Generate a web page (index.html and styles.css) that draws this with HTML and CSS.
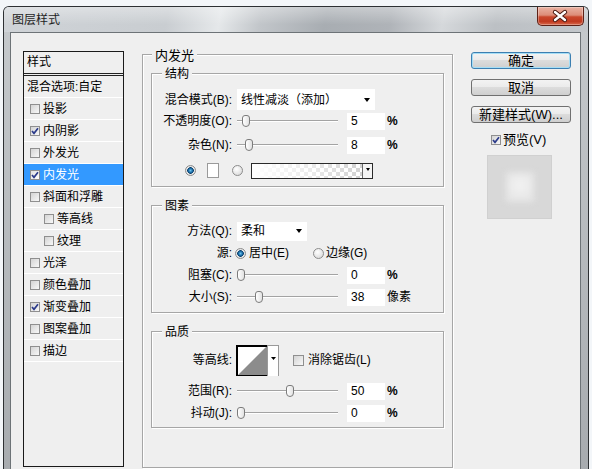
FILE: index.html
```html
<!DOCTYPE html>
<html lang="zh-CN">
<head>
<meta charset="utf-8">
<title>图层样式</title>
<link rel="stylesheet" href="styles.css">
</head>
<body>
<div class="window">
  <div class="titlebar">
    <span class="title">图层样式</span>
    <div class="close">
      <svg width="45" height="18" viewBox="0 0 45 18">
        <path d="M17 5 L27 13 M27 5 L17 13" stroke="#4a1a12" stroke-width="4.4" stroke-linecap="round"/>
        <path d="M17 5 L27 13 M27 5 L17 13" stroke="#fff" stroke-width="2.4" stroke-linecap="round"/>
      </svg>
    </div>
  </div>
  <div class="frame">
    <div class="client">
      <div class="stylelist">
        <div class="lh">样式</div>
        <div class="li plain">混合选项:自定</div>
        <div class="li"><span class="cb"></span>投影</div>
        <div class="li"><span class="cb"><svg width="8" height="8" viewBox="0 0 8 8"><path d="M1 4 L3 6.3 L7 1.3" fill="none" stroke="#2b3a8a" stroke-width="1.7"/></svg></span>内阴影</div>
        <div class="li"><span class="cb"></span>外发光</div>
        <div class="li sel"><span class="cb"><svg width="8" height="8" viewBox="0 0 8 8"><path d="M1 4 L3 6.3 L7 1.3" fill="none" stroke="#2b3a8a" stroke-width="1.7"/></svg></span>内发光</div>
        <div class="li"><span class="cb"></span>斜面和浮雕</div>
        <div class="li sub"><span class="cb"></span>等高线</div>
        <div class="li sub"><span class="cb"></span>纹理</div>
        <div class="li"><span class="cb"></span>光泽</div>
        <div class="li"><span class="cb"></span>颜色叠加</div>
        <div class="li"><span class="cb"><svg width="8" height="8" viewBox="0 0 8 8"><path d="M1 4 L3 6.3 L7 1.3" fill="none" stroke="#2b3a8a" stroke-width="1.7"/></svg></span>渐变叠加</div>
        <div class="li"><span class="cb"></span>图案叠加</div>
        <div class="li"><span class="cb"></span>描边</div>
      </div>

      <div class="group outer">
        <span class="gt">内发光</span>

        <div class="group inner g-struct">
          <span class="gt">结构</span>
          <div class="row r-a">
            <span class="lbl">混合模式(B):</span>
            <div class="dd wide"><span>线性减淡（添加）</span><span class="tri"></span></div>
          </div>
          <div class="row r-b">
            <span class="lbl">不透明度(O):</span>
            <div class="slider"><span class="thumb" style="margin-left:5px"></span></div>
            <span class="num">5</span><span class="unit">%</span>
          </div>
          <div class="row r-c">
            <span class="lbl">杂色(N):</span>
            <div class="slider"><span class="thumb" style="margin-left:8px"></span></div>
            <span class="num">8</span><span class="unit">%</span>
          </div>
          <div class="row r-d">
            <span class="radio on"></span>
            <span class="swatch"></span>
            <span class="radio r2"></span>
            <div class="grad"><span class="grad-fill"></span><span class="grad-btn"><span class="tri small"></span></span></div>
          </div>
        </div>

        <div class="group inner g-elem">
          <span class="gt">图素</span>
          <div class="row r-e first">
            <span class="lbl">方法(Q):</span>
            <div class="dd narrow"><span>柔和</span><span class="tri"></span></div>
          </div>
          <div class="row r-e">
            <span class="lbl tight">源:</span>
            <span class="radio on"></span>
            <span class="opt">居中(E)</span>
            <span class="radio r3"></span>
            <span class="opt o2">边缘(G)</span>
          </div>
          <div class="row r-e">
            <span class="lbl">阻塞(C):</span>
            <div class="slider"><span class="thumb" style="margin-left:0px"></span></div>
            <span class="num">0</span><span class="unit">%</span>
          </div>
          <div class="row r-e">
            <span class="lbl">大小(S):</span>
            <div class="slider"><span class="thumb" style="margin-left:18px"></span></div>
            <span class="num">38</span><span class="unit px">像素</span>
          </div>
        </div>

        <div class="group inner g-qual">
          <span class="gt">品质</span>
          <div class="row r-f">
            <span class="lbl tight4">等高线:</span>
            <svg class="contour" width="43" height="31" viewBox="0 0 43 31">
              <rect x="0" y="0" width="43" height="31" fill="#fff"/>
              <polygon points="2,30 31,1 31,30" fill="#8c8c8c"/>
              <path d="M1 31 V1 H31" fill="none" stroke="#000" stroke-width="2"/>
              <line x1="0" y1="30.5" x2="32" y2="30.5" stroke="#000"/>
              <line x1="31.5" y1="1" x2="31.5" y2="31" stroke="#9a9a9a"/>
              <line x1="42.5" y1="0" x2="42.5" y2="31" stroke="#9a9a9a"/>
              <line x1="31" y1="0.5" x2="43" y2="0.5" stroke="#9a9a9a"/>
              <polygon points="35,12 40,12 37.5,15" fill="#000"/>
            </svg>
            <span class="cb big"></span>
            <span class="opt">消除锯齿(L)</span>
          </div>
          <div class="row r-g">
            <span class="lbl">范围(R):</span>
            <div class="slider"><span class="thumb" style="margin-left:49px"></span></div>
            <span class="num">50</span><span class="unit">%</span>
          </div>
          <div class="row r-e">
            <span class="lbl">抖动(J):</span>
            <div class="slider"><span class="thumb" style="margin-left:0px"></span></div>
            <span class="num">0</span><span class="unit">%</span>
          </div>
        </div>
      </div>

      <div class="side">
        <div class="btn def">确定</div>
        <div class="btn">取消</div>
        <div class="btn">新建样式(W)...</div>
        <div class="preview-row">
          <span class="cb"><svg width="8" height="8" viewBox="0 0 8 8"><path d="M1 4 L3 6.3 L7 1.3" fill="none" stroke="#2b3a8a" stroke-width="1.7"/></svg></span>
          <span>预览(V)</span>
        </div>
        <div class="preview"><span class="blob"></span></div>
      </div>
    </div>
  </div>
</div>
</body>
</html>
```

FILE: styles.css
```css
* { box-sizing: border-box; }
html, body { margin: 0; padding: 0; }
body {
  width: 592px;
  height: 469px;
  overflow: hidden;
  background: #f3f6f9;
  font-family: "Liberation Sans", "Noto Sans CJK SC", sans-serif;
  font-size: 12px;
  line-height: 14px;
  color: #000;
}

.window {
  margin: 6px 0 0 3px;
  width: 586px;
  height: 480px;
  border: 1px solid #2d3033;
  border-bottom: 0;
  border-radius: 6px 6px 0 0;
  background: linear-gradient(to bottom, #c6cacd, #a6aaae);
  display: flex;
  flex-direction: column;
  overflow: hidden;
}

.titlebar {
  height: 25px;
  flex: none;
  display: flex;
  justify-content: space-between;
  align-items: flex-start;
  padding: 0 4px 0 8px;
  background:
    linear-gradient(to bottom, rgba(255,255,255,.35), rgba(255,255,255,0) 70%),
    linear-gradient(100deg, #cfd3d7 0%, #c9cdd1 28%, #e5e8ea 37%, #c2c6ca 44%, #a8adb2 55%, #afb3b8 66%, #d5d8db 75%, #bcc0c4 84%, #c3c7cb 100%);
}
.title { padding-top: 6px; color: #1e1e1e; }
.close {
  width: 47px;
  height: 19px;
  border: 1px solid #5e2116;
  border-top: 0;
  border-radius: 0 0 5px 5px;
  background: linear-gradient(to bottom, #e9b2a3 0%, #dd8d78 45%, #c9472c 55%, #c13a20 80%, #d8694c 100%);
  box-shadow: inset 0 0 0 1px rgba(255,255,255,.3);
  display: flex;
  align-items: center;
  justify-content: center;
}

.frame {
  flex: 1;
  display: flex;
  padding: 0 7px 0 6px;
}
.client {
  flex: 1;
  display: flex;
  align-items: flex-start;
  border: 1px solid #6d7377;
  border-bottom: 0;
  background: #efefef;
  padding: 18px 0 0 12px;
}

/* style list */
.stylelist {
  width: 101px;
  height: 416px;
  flex: none;
  border: 1px solid #1a1a1a;
  background: #efefef;
}
.lh {
  height: 24px;
  border-bottom: 3px double #222;
  padding-left: 3px;
  line-height: 21px;
}
.li {
  height: 22px;
  border-bottom: 1px solid #fff;
  display: flex;
  align-items: center;
  padding-left: 6px;
  white-space: nowrap;
}
.li.plain { padding-left: 3px; }
.li.sub { padding-left: 20px; }
.li.sel { background: #3399ff; color: #fff; }

.cb {
  width: 10px;
  height: 10px;
  flex: none;
  border: 1px solid #8f8f8f;
  background: linear-gradient(135deg, #d4d4d4, #f8f8f8);
  margin-right: 3px;
  display: flex;
  align-items: center;
  justify-content: center;
}
.cb svg { display: block; }
.li.sel .cb { background: linear-gradient(135deg, #e0e0e0, #fff); }

/* group boxes */
.group {
  border: 1px solid #a6a6a6;
  box-shadow: 1px 1px 0 #fff, inset 1px 1px 0 #fff;
}
.gt {
  display: block;
  width: fit-content;
  height: 14px;
  line-height: 14px;
  padding: 0 3px;
  background: #efefef;
  margin: -7px 0 0 10px;
  white-space: nowrap;
}
.outer {
  width: 311px;
  height: 414px;
  flex: none;
  margin: 3px 0 0 18px;
  padding: 0 8px;
}
.outer > .gt { margin: -6px 0 0 1px; font-size: 13px; }
.inner { margin-top: 10px; }
.inner + .inner { margin-top: 18px; }
.g-struct { padding-bottom: 3px; }
.g-elem { padding-bottom: 4px; }
.g-qual { padding-bottom: 3px; }

.row { display: flex; align-items: center; }
.r-a { margin-top: 8px; height: 21px; }
.r-b { height: 22px; }
.r-c { height: 26px; }
.r-d { height: 25px; padding-left: 33px; }
.r-e { height: 22px; }
.r-e.first { margin-top: 7px; }
.r-f { margin-top: 5px; height: 32px; }
.r-g { margin-top: 4px; height: 22px; }

.lbl {
  width: 80px;
  flex: none;
  text-align: right;
  margin-right: 5px;
  white-space: nowrap;
}
.lbl.tight { margin-right: 3px; }
.lbl.tight4 { margin-right: 4px; }

.dd {
  height: 21px;
  flex: none;
  background: #fff;
  display: flex;
  align-items: center;
  justify-content: space-between;
  padding: 0 5px 0 4px;
  white-space: nowrap;
}
.dd.wide { width: 138px; }
.dd.narrow { width: 70px; height: 19px; }
.tri {
  width: 0;
  height: 0;
  border-left: 3.5px solid transparent;
  border-right: 3.5px solid transparent;
  border-top: 4px solid #000;
}
.tri.small {
  border-left-width: 2.5px;
  border-right-width: 2.5px;
  border-top-width: 3px;
}

.slider {
  width: 101px;
  height: 14px;
  flex: none;
  display: flex;
  align-items: center;
  background: linear-gradient(to bottom, transparent 6px, #a3a3a3 6px, #a3a3a3 7px, #fff 7px, #fff 8px, transparent 8px);
}
.thumb {
  width: 8px;
  height: 12px;
  border: 1px solid #7c7c7c;
  border-radius: 3px 3px 4px 4px;
  background: linear-gradient(to right, #fff, #e2e2e2);
}
.num {
  width: 38px;
  height: 17px;
  flex: none;
  background: #fff;
  margin-left: 9px;
  padding-left: 4px;
  line-height: 17px;
}
.unit { margin-left: 2px; font-weight: bold; }
.unit.px { font-weight: normal; }

.radio {
  width: 11px;
  height: 11px;
  flex: none;
  border-radius: 50%;
  border: 1px solid #8c8c8c;
  background: radial-gradient(circle at 40% 35%, #fff, #d3d3d3);
}
.radio.on {
  background: radial-gradient(circle at 50% 50%, #6cc3ee 0, #1c6ea8 2px, #0b3f6b 3px, #ececec 3.6px, #cfcfcf 100%);
}
.radio.r2 { margin-left: 13px; }
.radio.r3 { margin-left: 24px; }
.opt { margin-left: 3px; white-space: nowrap; }
.opt.o2 { margin-left: 2px; }

.swatch {
  width: 12px;
  height: 15px;
  flex: none;
  margin-left: 11px;
  background: #fff;
  border: 1px solid #9a9a9a;
}
.grad {
  width: 122px;
  height: 16px;
  flex: none;
  margin-left: 8px;
  display: flex;
  border: 1px solid #2a2a2a;
}
.grad-fill {
  flex: 1;
  background:
    linear-gradient(to right, #fff 0%, rgba(255,255,255,.6) 50%, rgba(255,255,255,0) 100%),
    repeating-conic-gradient(#d2d2d2 0 25%, #fff 0 50%) 0 0 / 8px 8px;
}
.grad-btn {
  width: 10px;
  border-left: 1px solid #6a6a6a;
  background: #f4f4f4;
  display: flex;
  justify-content: center;
  padding-top: 4px;
}

.contour { display: block; flex: none; }
.cb.big { width: 11px; height: 11px; margin: 0 0 0 14px; }
.r-f .opt { margin-left: 4px; }

/* right side */
.side {
  width: 100px;
  flex: none;
  margin: 1px 0 0 18px;
  display: flex;
  flex-direction: column;
  align-items: flex-start;
}
.btn {
  width: 100px;
  height: 17px;
  border: 1px solid #707070;
  border-radius: 3px;
  background: linear-gradient(#f3f3f3 0, #ebebeb 45%, #dcdcdc 50%, #cfcfcf 100%);
  font-size: 13px;
  line-height: 15px;
  text-align: center;
  margin-bottom: 10px;
  white-space: nowrap;
}
.btn.def {
  border-color: #3c7fb1;
  box-shadow: inset 0 0 0 1px #a5def6;
}
.preview-row {
  margin-left: 20px;
  height: 14px;
  display: flex;
  align-items: center;
  font-size: 13px;
}
.preview-row .cb { margin-right: 2px; }
.preview {
  margin: 8px 0 0 16px;
  width: 65px;
  height: 64px;
  border: 1px solid #d0d0d0;
  background: #d8d8d8;
  display: flex;
  align-items: center;
  justify-content: center;
  overflow: hidden;
}
.blob {
  width: 28px;
  height: 30px;
  background: radial-gradient(circle at 50% 45%, #f3f3f3, #e6e6e6 70%);
  filter: blur(3px);
}
```
